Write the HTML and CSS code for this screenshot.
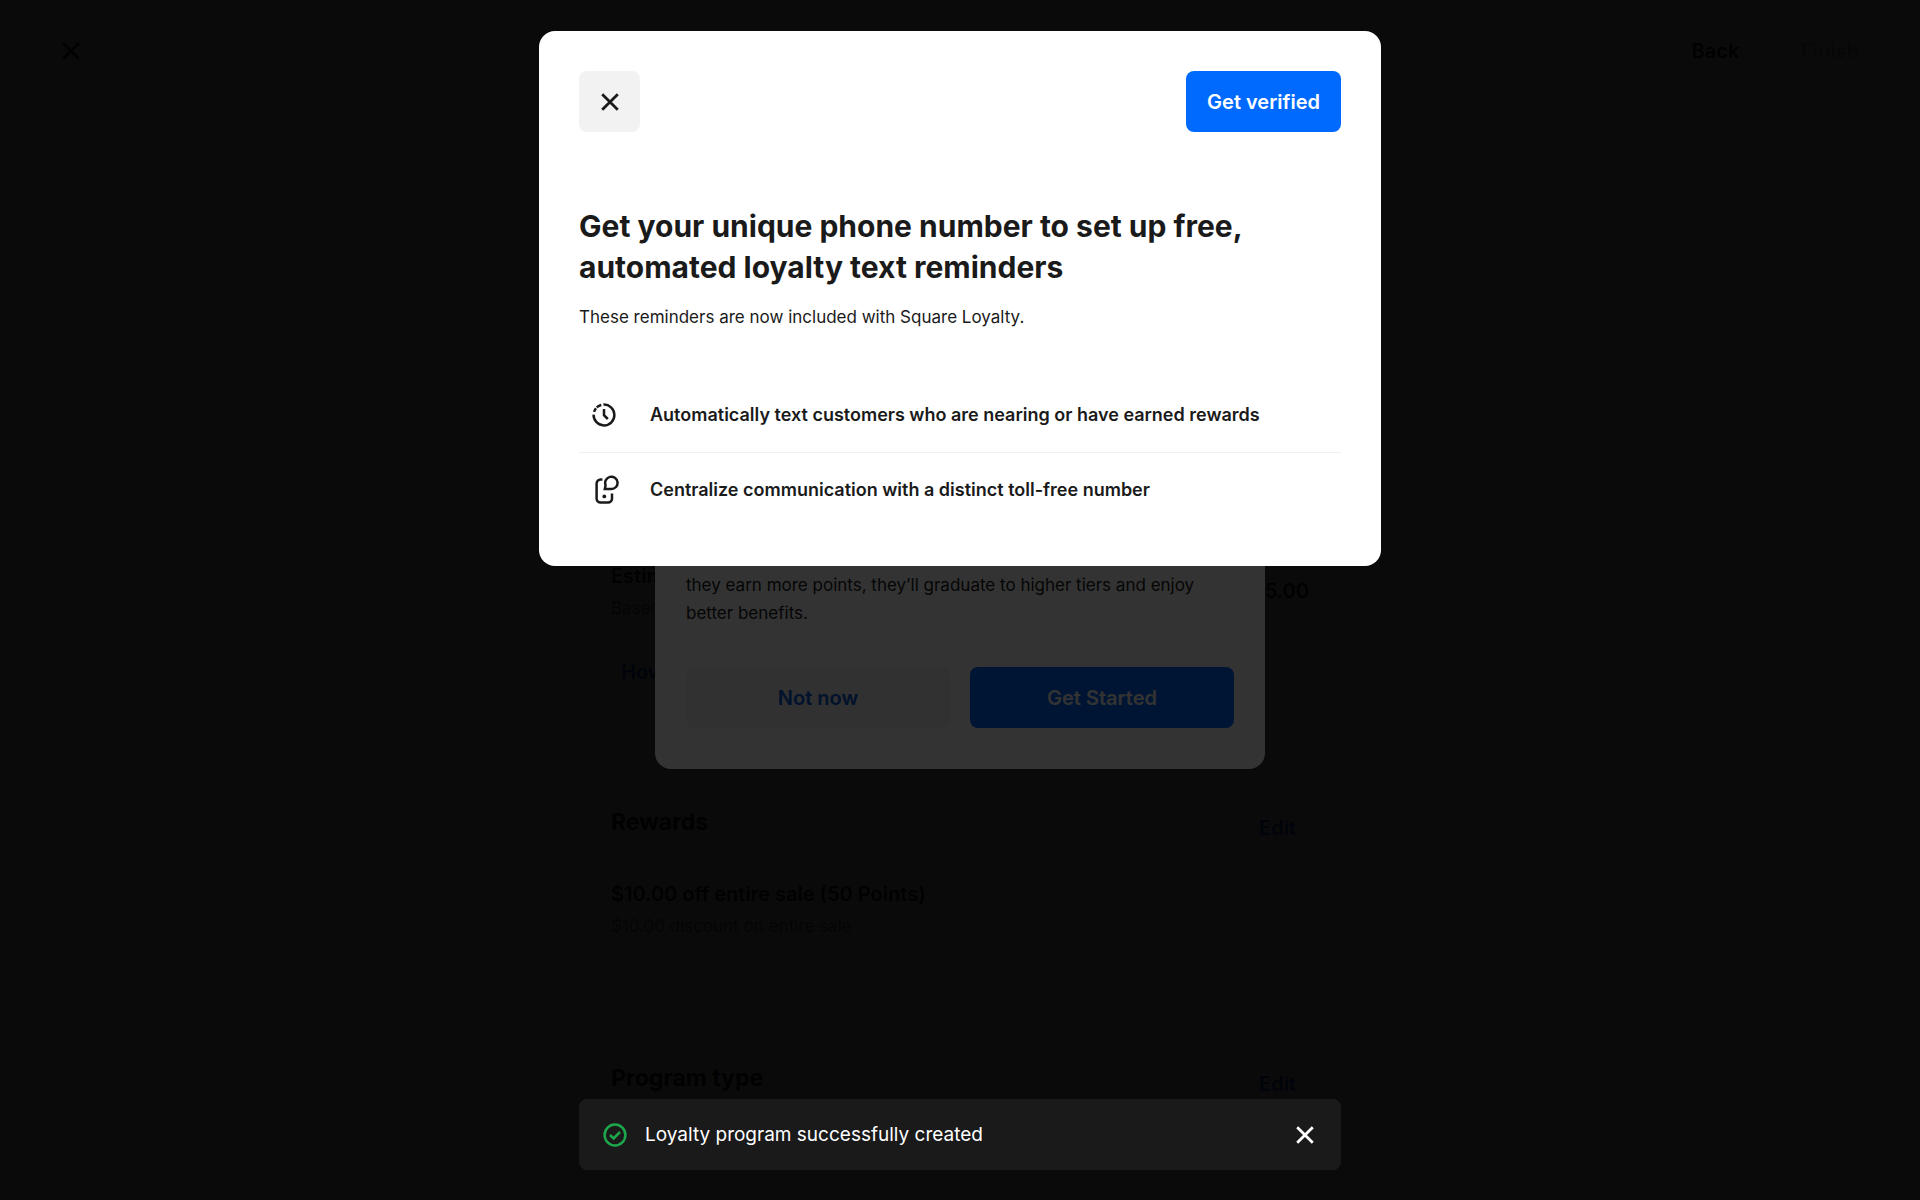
FILE: index.html
```html
<!DOCTYPE html>
<html lang="en">
<head>
    <meta charset="UTF-8">
    <meta name="viewport" content="width=device-width, initial-scale=1.0">
    <title>Square Loyalty</title>
    <link rel="stylesheet" href="styles.css">
</head>
<body>
    <div class="page">
        <header class="page-header">
            <button class="icon-button" aria-label="Close setup">
                <svg class="icon-close" viewBox="0 0 18 18"><path d="M2 2L16 16M16 2L2 16"/></svg>
            </button>
            <div class="page-actions">
                <button class="link-button">Back</button>
                <button class="link-button" disabled>Finish</button>
            </div>
        </header>
        <main class="summary">
            <section class="estimate">
                <div class="estimate-row">
                    <div>
                        <h3>Estimated sales</h3>
                        <p class="muted">Based on sales</p>
                    </div>
                    <span class="amount">$45.00</span>
                </div>
                <a class="how-link" href="#">How</a>
            </section>
            <section class="rewards">
                <div class="section-title">
                    <h2>Rewards</h2>
                    <a href="#">Edit</a>
                </div>
                <h3>$10.00 off entire sale (50 Points)</h3>
                <p class="muted">$10.00 discount on entire sale</p>
            </section>
            <section class="program">
                <div class="section-title">
                    <h2>Program type</h2>
                    <a href="#">Edit</a>
                </div>
            </section>
        </main>
    </div>

    <!-- Loyalty tiers dialog -->
    <div class="overlay overlay-center">
        <div class="modal tiers-modal" role="dialog" aria-label="Loyalty tiers">
            <p>they earn more points, they’ll graduate to higher tiers and enjoy better benefits.</p>
            <div class="modal-buttons">
                <button class="btn btn-secondary">Not now</button>
                <button class="btn btn-primary">Get Started</button>
            </div>
        </div>
    </div>

    <!-- Text reminders dialog -->
    <div class="overlay">
        <div class="modal verify-modal" role="dialog" aria-labelledby="verify-title">
            <div class="modal-top">
                <button class="btn btn-close" aria-label="Close">
                    <svg class="icon-close" viewBox="0 0 18 18"><path d="M2 2L16 16M16 2L2 16"/></svg>
                </button>
                <button class="btn btn-primary">Get verified</button>
            </div>
            <h1 id="verify-title">Get your unique phone number to set up free, automated loyalty text reminders</h1>
            <p>These reminders are now included with Square Loyalty.</p>
            <ul class="benefits">
                <li>
                    <svg class="icon-benefit" viewBox="0 0 30 30">
                        <path d="M14.4 4.6A10.4 10.4 0 1 1 4.6 14.6"/>
                        <path d="M5.1 11.9A10.4 10.4 0 0 1 7 8.3M7.8 7.4A10.4 10.4 0 0 1 12.3 5"/>
                        <path d="M15 9V15.2L18.8 19"/>
                    </svg>
                    <span>Automatically text customers who are nearing or have earned rewards</span>
                </li>
                <li>
                    <svg class="icon-benefit" viewBox="0 0 30 30">
                        <path d="M13.4 4.4H11.6A4 4 0 0 0 7.6 8.4V23.6A4 4 0 0 0 11.6 27.6H19A4 4 0 0 0 23 23.6V18.4"/>
                        <path d="M15.8 14.1L16.6 10.2A6.2 6.2 0 1 1 22.3 14.1Z"/>
                        <circle class="dot" cx="15.3" cy="21.4" r="1.9"/>
                    </svg>
                    <span>Centralize communication with a distinct toll-free number</span>
                </li>
            </ul>
        </div>
    </div>

    <div class="toast" role="status">
        <svg class="icon-success" viewBox="0 0 24 24">
            <circle cx="12" cy="12" r="10.4"/>
            <path d="M7 12L10.6 15.4L17 9"/>
        </svg>
        <span>Loyalty program successfully created</span>
        <button class="icon-button" aria-label="Dismiss">
            <svg class="icon-close" viewBox="0 0 18 18"><path d="M2 2L16 16M16 2L2 16"/></svg>
        </button>
    </div>
</body>
</html>
```

FILE: styles.css
```css
* {
    box-sizing: border-box;
    margin: 0;
    padding: 0;
}

body {
    height: 100vh;
    overflow: hidden;
    font-family: Inter, "Liberation Sans", sans-serif;
    font-size: 17px;
    line-height: 28px;
    color: #1a1a1a;
    background: #fff;
}

button {
    border: none;
    background: none;
    font: inherit;
    color: inherit;
    cursor: pointer;
}

a {
    color: #005ad9;
    text-decoration: none;
}

h3 {
    font-size: 20px;
    font-weight: 600;
    line-height: 32px;
}

/* Page behind the dialogs */
.page-header {
    display: flex;
    justify-content: space-between;
    align-items: center;
    height: 102px;
    padding: 0 61px;
}

.page-actions {
    display: flex;
    gap: 62px;
}

.icon-button {
    display: flex;
    padding: 0;
}

.link-button {
    font-size: 20px;
    font-weight: 600;
    color: #1a1a1a;
}

.link-button:disabled {
    color: #b3b3b3;
}

.summary {
    max-width: 698px;
    margin: 0 auto;
    padding-top: 458px;
}

.estimate-row {
    display: flex;
    justify-content: space-between;
    align-items: center;
}

.muted {
    margin-top: 2px;
    color: #737373;
}

.amount {
    font-size: 20px;
    font-weight: 600;
}

.how-link {
    display: block;
    margin-top: 36px;
    padding-left: 10px;
    font-size: 20px;
    font-weight: 600;
}

.rewards {
    margin-top: 120px;
}

.program {
    margin-top: 122px;
}

.section-title {
    display: flex;
    justify-content: space-between;
    align-items: flex-start;
    padding-right: 13px;
    margin-bottom: 36px;
}

.section-title h2 {
    font-size: 23px;
    line-height: 32px;
}

.section-title a {
    padding-top: 8px;
    font-size: 20px;
    font-weight: 600;
}

/* Dialogs */
.overlay {
    position: fixed;
    inset: 0;
    display: flex;
    justify-content: center;
    align-items: flex-start;
    padding: 31px 30px;
    background: rgba(0, 0, 0, 0.8);
}

.overlay-center {
    align-items: center;
}

.modal {
    width: 100%;
    background: #fff;
    border-radius: 16px;
}

.tiers-modal {
    display: flex;
    flex-direction: column;
    justify-content: flex-end;
    gap: 40px;
    max-width: 610px;
    min-height: 338px;
    padding: 31px 31px 41px;
}

.modal-buttons {
    display: flex;
    gap: 20px;
}

.modal-buttons .btn {
    flex: 1;
}

.verify-modal {
    max-width: 842px;
    padding: 40px;
}

.modal-top {
    display: flex;
    justify-content: space-between;
    margin-bottom: 74px;
}

.verify-modal h1 {
    margin-bottom: 15px;
    font-size: 30px;
    line-height: 41px;
}

.btn {
    height: 61px;
    padding: 0 21px;
    border-radius: 8px;
    font-size: 20px;
    font-weight: 600;
}

.btn-primary {
    background: #006aff;
    color: #fff;
}

.btn-secondary {
    background: #f2f2f2;
    color: #005ad9;
}

.btn-close {
    display: flex;
    justify-content: center;
    align-items: center;
    width: 61px;
    padding: 0;
    background: #f2f2f2;
}

.benefits {
    margin-top: 47px;
    list-style: none;
}

.benefits li {
    display: flex;
    align-items: center;
    gap: 31px;
    height: 74px;
    padding-left: 10px;
    font-size: 18px;
    font-weight: 600;
}

.benefits li + li {
    border-top: 1px solid #f0f0f0;
}

/* Toast */
.toast {
    position: fixed;
    right: 30px;
    bottom: 30px;
    left: 30px;
    display: flex;
    align-items: center;
    gap: 18px;
    max-width: 762px;
    height: 71px;
    margin: 0 auto;
    padding: 0 26px 0 24px;
    border-radius: 8px;
    background: #1a1a1a;
    color: #fff;
    font-size: 19px;
}

.toast .icon-button {
    margin-left: auto;
}

/* Icons */
svg {
    flex: none;
    fill: none;
    stroke: currentColor;
    stroke-width: 2.5;
}

.icon-close {
    width: 20px;
    height: 20px;
}

.icon-benefit {
    width: 30px;
    height: 30px;
}

.icon-benefit .dot {
    fill: currentColor;
    stroke: none;
}

.icon-success {
    width: 24px;
    height: 24px;
    color: #1ca84a;
}
```
